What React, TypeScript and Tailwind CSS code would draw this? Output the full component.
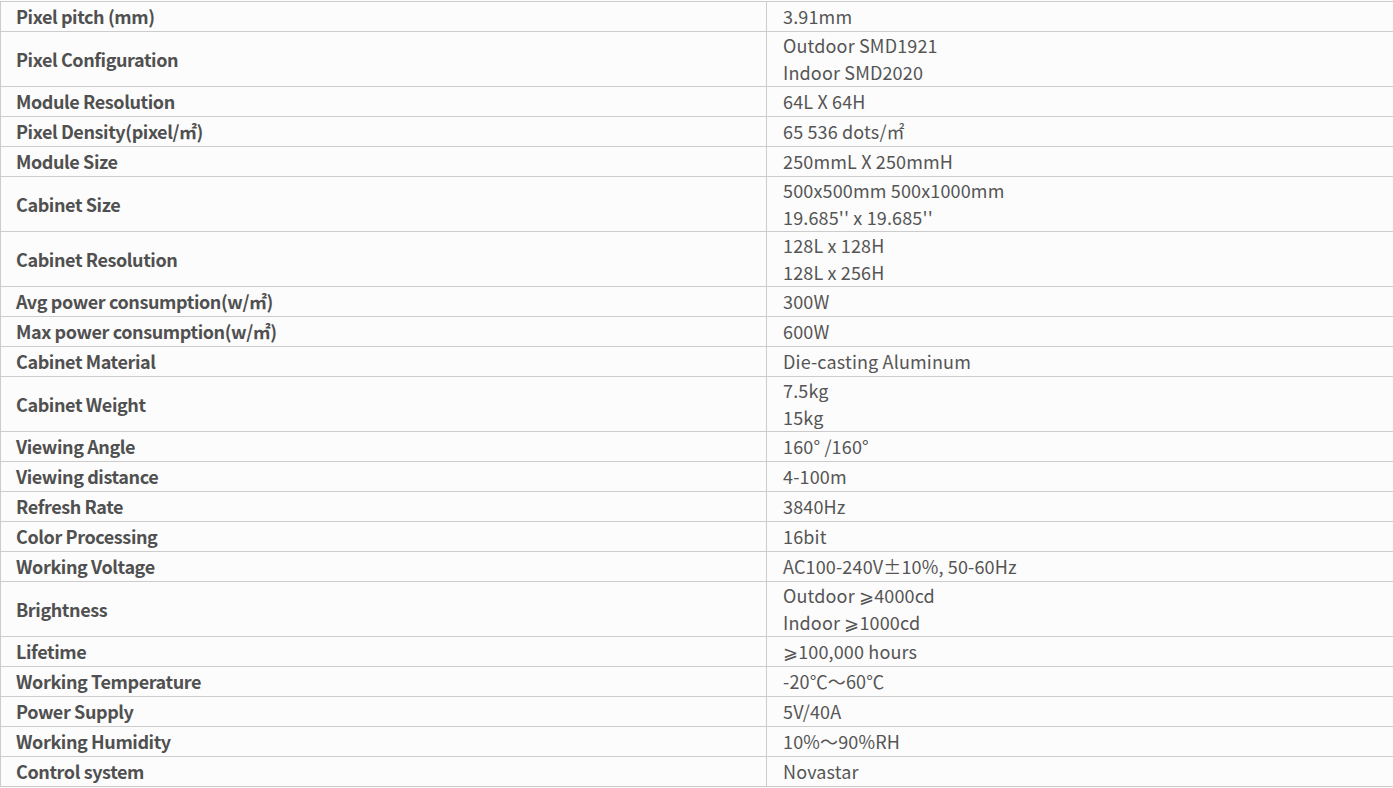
const specs: { label: string; value: string[] }[] = [
  { label: "Pixel pitch (mm)", value: ["3.91mm"] },
  { label: "Pixel Configuration", value: ["Outdoor SMD1921", "Indoor SMD2020"] },
  { label: "Module Resolution", value: ["64L X 64H"] },
  { label: "Pixel Density(pixel/㎡)", value: ["65 536 dots/㎡"] },
  { label: "Module Size", value: ["250mmL X 250mmH"] },
  { label: "Cabinet Size", value: ["500x500mm 500x1000mm", "19.685'' x 19.685''"] },
  { label: "Cabinet Resolution", value: ["128L x 128H", "128L x 256H"] },
  { label: "Avg power consumption(w/㎡)", value: ["300W"] },
  { label: "Max power consumption(w/㎡)", value: ["600W"] },
  { label: "Cabinet Material", value: ["Die-casting Aluminum"] },
  { label: "Cabinet Weight", value: ["7.5kg", "15kg"] },
  { label: "Viewing Angle", value: ["160° /160°"] },
  { label: "Viewing distance", value: ["4-100m"] },
  { label: "Refresh Rate", value: ["3840Hz"] },
  { label: "Color Processing", value: ["16bit"] },
  { label: "Working Voltage", value: ["AC100-240V±10%, 50-60Hz"] },
  { label: "Brightness", value: ["Outdoor ⩾4000cd", "Indoor ⩾1000cd"] },
  { label: "Lifetime", value: ["⩾100,000 hours"] },
  { label: "Working Temperature", value: ["-20℃～60℃"] },
  { label: "Power Supply", value: ["5V/40A"] },
  { label: "Working Humidity", value: ["10%～90%RH"] },
  { label: "Control system", value: ["Novastar"] },
];

export default function App() {
  return (
    <div
      className="min-h-screen w-full overflow-hidden bg-[#fcfcfc] pt-px text-[18px] text-[#555555]"
      style={{ fontFamily: '"Noto Sans CJK SC", "Noto Sans", sans-serif' }}
    >
      <div className="border-t border-l border-[#cccccc]">
        {specs.map((row) => (
          <div
            key={row.label}
            className={`grid grid-cols-[766px_1fr] border-b border-[#cccccc] ${
              row.value.length > 1 ? "h-[55px]" : "h-[30px]"
            }`}
          >
            <div className="flex items-center border-r border-[#cccccc] pl-[15px] font-bold leading-[27px] tracking-[-0.4px] text-[#505050]">
              {row.label}
            </div>
            <div className="flex flex-col justify-center pl-[16px] leading-[27px] tracking-[0.15px]">
              {row.value.map((v) => (
                <span key={v}>{v}</span>
              ))}
            </div>
          </div>
        ))}
      </div>
    </div>
  );
}
